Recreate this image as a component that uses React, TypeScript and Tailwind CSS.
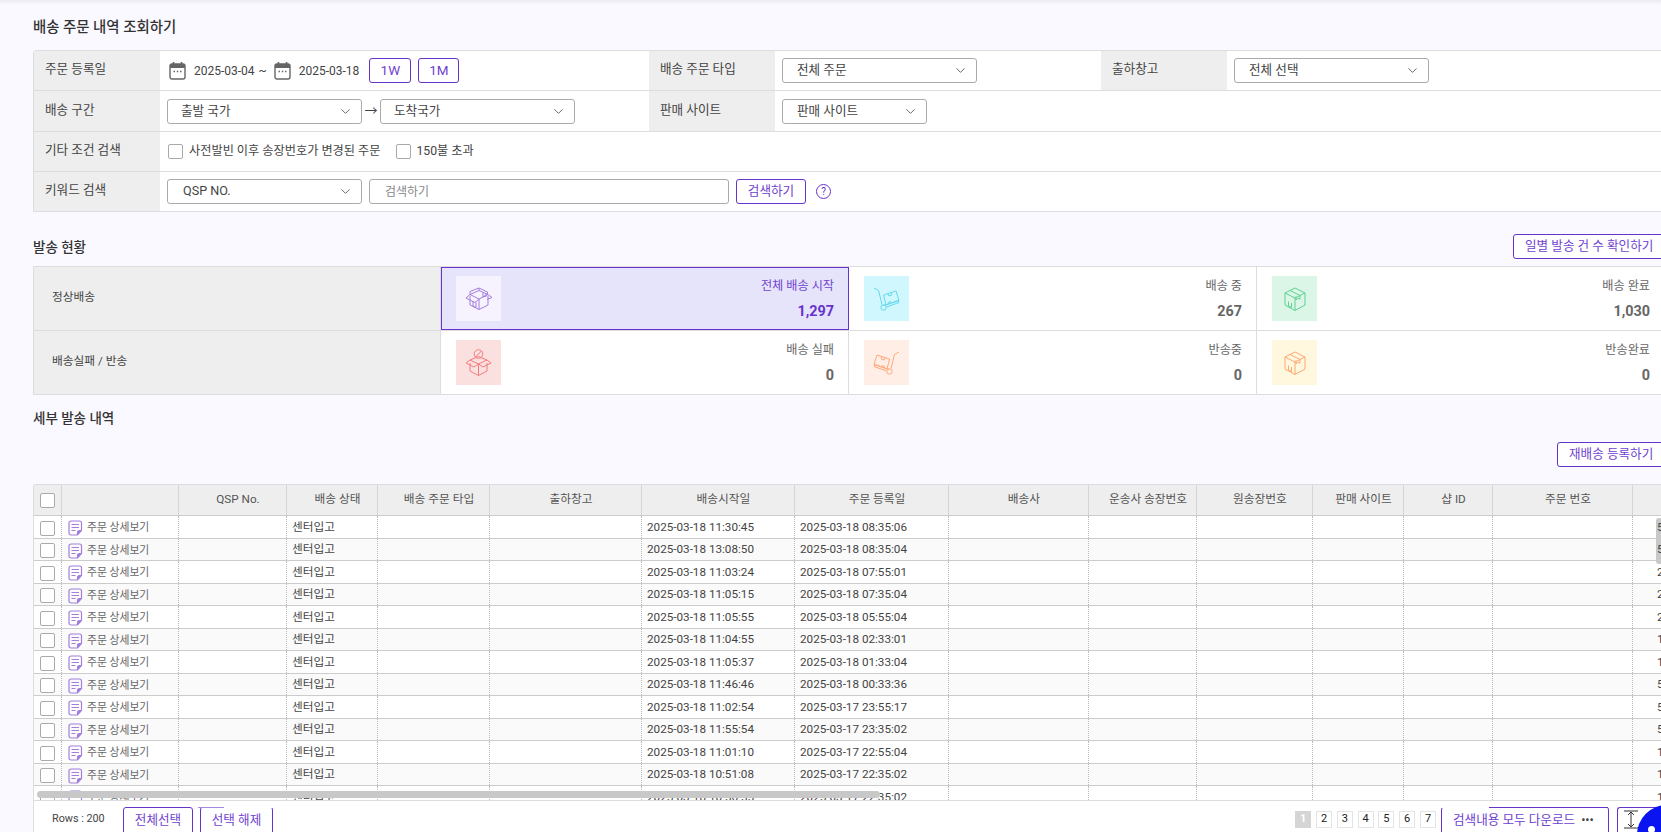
import type { ReactNode } from "react";
import { ChevronDown } from "lucide-react";

const rows = [
  ["2025-03-18 11:30:45", "2025-03-18 08:35:06", "5"],
  ["2025-03-18 13:08:50", "2025-03-18 08:35:04", "5"],
  ["2025-03-18 11:03:24", "2025-03-18 07:55:01", "2"],
  ["2025-03-18 11:05:15", "2025-03-18 07:35:04", "2"],
  ["2025-03-18 11:05:55", "2025-03-18 05:55:04", "2"],
  ["2025-03-18 11:04:55", "2025-03-18 02:33:01", "1"],
  ["2025-03-18 11:05:37", "2025-03-18 01:33:04", "1"],
  ["2025-03-18 11:46:46", "2025-03-18 00:33:36", "5"],
  ["2025-03-18 11:02:54", "2025-03-17 23:55:17", "5"],
  ["2025-03-18 11:55:54", "2025-03-17 23:35:02", "5"],
  ["2025-03-18 11:01:10", "2025-03-17 22:55:04", "1"],
  ["2025-03-18 10:51:08", "2025-03-17 22:35:02", "1"],
  ["2025-03-18 10:56:55", "2025-03-17 22:35:02", "1"],
];

const headers = ["", "QSP No.", "배송 상태", "배송 주문 타입", "출하창고", "배송시작일", "주문 등록일", "배송사", "운송사 송장번호", "원송장번호", "판매 사이트", "샵 ID", "주문 번호", ""];

const gridCols = "grid grid-cols-[28px_117px_108px_91px_112px_152px_153px_154px_140px_108px_116px_91px_89px_140px_129px]";

function Calendar() {
  return (
    <svg width="17" height="19" viewBox="0 0 17 19" fill="none" className="shrink-0">
      <path d="M1 5a2 2 0 0 1 2-2h11a2 2 0 0 1 2 2v2H1z" fill="#666" />
      <rect x="1" y="3" width="15" height="15" rx="2" stroke="#666" strokeWidth="1.4" />
      <path d="M4.5 1v3M12.5 1v3" stroke="#666" strokeWidth="1.6" />
      <path d="M4.5 10.5h1.5M7.8 10.5h1.5M11 10.5h1.5" stroke="#666" strokeWidth="1.4" />
    </svg>
  );
}

function Select({ label, className, pad = "pl-[13px]" }: { label: string; className: string; pad?: string }) {
  return (
    <div className={`flex h-[25px] items-center justify-between rounded-[3px] border border-[#aaa] bg-white pr-[8px] text-[12.6px] text-[#444] ${pad} ${className}`}>
      <span>{label}</span>
      <ChevronDown size={15} strokeWidth={1.4} className="text-[#555]" />
    </div>
  );
}

function Label({ children, className = "w-[126px]" }: { children: ReactNode; className?: string }) {
  return <div className={`flex shrink-0 items-center self-stretch bg-[#eeeeee] pb-[2px] pl-[11px] text-[12.6px] text-[#444] ${className}`}>{children}</div>;
}

function OutlineBtn({ children, className = "" }: { children: ReactNode; className?: string }) {
  return <button className={`flex h-[25px] items-center justify-center rounded-[3px] border border-[#6633cc] bg-white text-[#6f42d0] ${className}`}>{children}</button>;
}

function Check({ className = "" }: { className?: string }) {
  return <span className={`block h-[15px] w-[15px] shrink-0 rounded-[2px] border border-[#aaa] bg-white ${className}`} />;
}

function OpenBox({ color }: { color: string }) {
  return (
    <svg width="28" height="23" viewBox="0 0 28 23" fill="none" stroke={color} strokeWidth="1">
      <path d="M5 9v9l9 4.5 9-4.5V9" />
      <path d="M14 22.500V12L5 7.500 14 3.500l9 4L14 12" />
      <path d="M5 7.500 1 11l9 4.500L14 12M23 7.500 27 10.500l-5 2M14 3.500V1L5 4.500v3M14 1l8.500 4v2.500" />
      <path d="M18 6v4l1.500-.8 1.500.3V6.500M8 14v5l3 1.500v-5" />
    </svg>
  );
}

function BlockedBox({ color }: { color: string }) {
  return (
    <svg width="27" height="27" viewBox="0 0 27 27" fill="none" stroke={color} strokeWidth="1">
      <circle cx="13.500" cy="5" r="4.300" />
      <path d="M10.500 8 16.500 2" />
      <path d="M5 14v8l8.500 4.500L22 22v-8" />
      <path d="M13.500 26.500V15L5 11l8.500-3.500L22 11l-8.500 4" />
      <path d="M5 11 1 14l8 4 4.500-3 4.500 3 8-4-4-3" />
    </svg>
  );
}

function ClosedBox({ color }: { color: string }) {
  return (
    <svg width="22" height="24" viewBox="0 0 22 24" fill="none" stroke={color} strokeWidth="1">
      <path d="M11 1 21 6v12l-10 5.500L1 18V6z" />
      <path d="M1 6l10 5 10-5M11 11v12.500" />
      <path d="M6 3.500l10 5V12l-2.500-.5L12 13V9.500M4.500 14.500v4.500l3 1.500v-4.500" />
    </svg>
  );
}

function Cart({ color, flip = false }: { color: string; flip?: boolean }) {
  return (
    <svg width="27" height="24" viewBox="0 0 27 24" fill="none" stroke={color} strokeWidth="1" className={flip ? "-scale-x-100" : ""}>
      <path d="M1 1l4.500 2.500 3.500 14" />
      <circle cx="10.500" cy="20.500" r="2.700" />
      <path d="M13.500 20 26 15.500l-1-2-14.500 5" />
      <path d="M10.500 8 23 4l3 9.500-13 4.500z" />
      <path d="M15 6.500l.8 2.500 3-1-.8-2.500M15 15.500l3-1" />
    </svg>
  );
}

function NoteIcon() {
  return (
    <svg width="15" height="16" viewBox="0 0 15 16" fill="none" stroke="#a27fdc" strokeWidth="1.2" className="shrink-0">
      <path d="M9.500 15H3a2 2 0 0 1-2-2V3a2 2 0 0 1 2-2h8.500a2 2 0 0 1 2 2v7.500z" />
      <path d="M3.500 4.500h7.500M3.500 7.500h7.500M3.500 10.500h4" />
      <path d="M13.500 10.500h-2a2 2 0 0 0-2 2V15" fill="#a27fdc" />
    </svg>
  );
}

function StatCell({ icon, bg, title, value, active = false }: { icon: ReactNode; bg: string; title: string; value: string; active?: boolean }) {
  return (
    <div className={`flex h-full flex-1 items-center justify-between border-r pl-[15px] pr-[14px] ${active ? "bg-[#e6e4fb] outline -outline-offset-1 outline-[#6633cc]" : "border-[#ddd] bg-white"}`}>
      <div className={`flex h-[45px] w-[45px] items-center justify-center ${bg}`}>{icon}</div>
      <div className={`flex flex-col items-end ${active ? "text-[#6f42d0]" : "text-[#666]"}`}>
        <span className="text-[12.150px] leading-[18px]">{title}</span>
        <span className={`mt-[8px] text-[14.400px] font-bold leading-[18px] ${active ? "text-[#6633cc]" : "text-[#666]"}`}>{value}</span>
      </div>
    </div>
  );
}

export default function App() {
  return (
    <div className="h-[832px] w-[1661px] overflow-hidden bg-[#f9f9ff] text-[#333] [font-family:Roboto,'Noto_Sans_CJK_KR',sans-serif]">
      <div className="h-[5px] bg-gradient-to-b from-[#ececf0] to-[#f9f9ff]" />
      <div className="w-[1700px] pl-[33px]">
        <h1 className="flex h-[45px] items-center pt-[1px] text-[14.400px] font-medium text-[#333]">배송 주문 내역 조회하기</h1>

        {/* search filter */}
        <div className="rounded-tl-[3px] border border-[#ddd] bg-white text-[12px] text-[#444]">
          <div className="flex h-[40px] items-center border-b border-[#ddd]">
            <Label>주문 등록일</Label>
            <div className="flex w-[489px] items-center pl-[9px]">
              <Calendar />
              <span className="ml-[8px]">2025-03-04</span>
              <span className="ml-[4px]">~</span>
              <span className="ml-[7px]"><Calendar /></span>
              <span className="ml-[8px]">2025-03-18</span>
              <OutlineBtn className="ml-[10px] w-[42px] text-[13.500px]">1W</OutlineBtn>
              <OutlineBtn className="ml-[7px] w-[41px] text-[13.500px]">1M</OutlineBtn>
            </div>
            <Label>배송 주문 타입</Label>
            <div className="flex w-[326px] items-center pl-[7px]">
              <Select label="전체 주문" className="w-[195px]" pad="pl-[14px]" />
            </div>
            <Label>출하창고</Label>
            <div className="flex items-center pl-[7px]">
              <Select label="전체 선택" className="w-[195px]" pad="pl-[14px]" />
            </div>
          </div>
          <div className="flex h-[41px] items-center border-b border-[#ddd]">
            <Label>배송 구간</Label>
            <div className="flex w-[489px] items-center pl-[7px]">
              <Select label="출발 국가" className="w-[195px]" />
              <span className="flex w-[18px] justify-center text-[13px]">→</span>
              <Select label="도착국가" className="w-[195px]" />
            </div>
            <Label>판매 사이트</Label>
            <div className="flex items-center pl-[7px]">
              <Select label="판매 사이트" className="w-[145px]" pad="pl-[14px]" />
            </div>
          </div>
          <div className="flex h-[40px] items-center border-b border-[#ddd]">
            <Label>기타 조건 검색</Label>
            <div className="flex items-center pl-[8px] text-[12.200px]">
              <Check />
              <span className="ml-[6px]">사전발빈 이후 송장번호가 변경된 주문</span>
              <Check className="ml-[15px]" />
              <span className="ml-[6px]">150불 초과</span>
            </div>
          </div>
          <div className="flex h-[39px] items-center">
            <Label>키워드 검색</Label>
            <div className="flex items-center pl-[7px]">
              <Select label="QSP NO." className="w-[195px]" pad="pl-[15px]" />
              <div className="ml-[7px] flex h-[25px] w-[360px] items-center rounded-[3px] border border-[#aaa] bg-white pl-[15px] text-[#888]">검색하기</div>
              <OutlineBtn className="ml-[7px] w-[70px] text-[12.600px]">검색하기</OutlineBtn>
              <span className="ml-[10px] flex h-[15px] w-[15px] items-center justify-center rounded-full border border-[#6633cc] text-[10px] leading-none text-[#6633cc]">?</span>
            </div>
          </div>
        </div>

        {/* delivery status */}
        <div className="flex h-[54px] items-end justify-between pb-[7px]">
          <h2 className="mb-[2px] text-[13.500px] font-medium leading-[20px] text-[#333]">발송 현황</h2>
          <OutlineBtn className="w-[187px] justify-start pl-[11px] text-[12.600px]">일별 발송 건 수 확인하기</OutlineBtn>
        </div>
        <div className="w-[1633px] border border-[#ddd] text-[11.700px] text-[#444]">
          <div className="flex h-[64px] items-center border-b border-[#ddd]">
            <div className="flex h-full w-[407px] shrink-0 items-center border-r border-[#ddd] bg-[#eeeeee] pb-[1px] pl-[18px]">정상배송</div>
            <StatCell icon={<OpenBox color="#a27fdc" />} bg="bg-[#f6f3ff]" title="전체 배송 시작" value="1,297" active />
            <StatCell icon={<Cart color="#66d9ee" />} bg="bg-[#cff7fd]" title="배송 중" value="267" />
            <StatCell icon={<ClosedBox color="#5cd192" />} bg="bg-[#dbf6e6]" title="배송 완료" value="1,030" />
          </div>
          <div className="flex h-[63px] items-center">
            <div className="flex h-full w-[407px] shrink-0 items-center border-r border-[#ddd] bg-[#eeeeee] pb-[1px] pl-[18px]">배송실패 / 반송</div>
            <StatCell icon={<BlockedBox color="#f47c7c" />} bg="bg-[#fbe0e0]" title="배송 실패" value="0" />
            <StatCell icon={<Cart color="#ffa97c" flip />} bg="bg-[#ffeee6]" title="반송중" value="0" />
            <StatCell icon={<ClosedBox color="#ffa872" />} bg="bg-[#fff7de]" title="반송완료" value="0" />
          </div>
        </div>

        {/* detail grid */}
        <h2 className="mt-[13px] text-[13.500px] font-medium leading-[20px] text-[#333]">세부 발송 내역</h2>
        <div className="mt-[14px] flex w-[1628px] justify-end overflow-hidden">
          <OutlineBtn className="-mr-[7px] w-[111px] justify-start pl-[11px] text-[12.600px]">재배송 등록하기</OutlineBtn>
        </div>

        <div className="relative mt-[17px] w-[1628px] overflow-hidden rounded-tl-[3px] border-l border-t border-[#ddd] bg-white text-[11.700px]">
          <div className={`${gridCols} h-[31px] border-b border-[#ccc] bg-[#eeeeee] text-[#555]`}>
            <div className="flex items-center justify-center border-r border-[#d5d5d5]">
              <Check className="-ml-px" />
            </div>
            {headers.map((h, i) => (
              <div key={i} className="flex items-center justify-center border-r border-[#d5d5d5] pl-[11px]">{h}</div>
            ))}
          </div>
          <div className="h-[284px] overflow-hidden">
            {rows.map((r, i) => (
              <div key={i} className={`${gridCols} h-[22.500px] border-b border-[#ccc] text-[#444] ${i % 2 ? "bg-[#fafafa]" : "bg-white"}`}>
                <div className="flex items-center justify-center border-r border-dotted border-[#bbb] pt-[3px]"><Check /></div>
                <div className="flex items-center border-r border-dotted border-[#bbb] pl-[6px] pt-[3px] text-[10.800px] text-[#666]">
                  <NoteIcon />
                  <span className="ml-[4px]">주문 상세보기</span>
                </div>
                <div className="border-r border-dotted border-[#bbb]" />
                <div className="flex items-center border-r border-dotted border-[#bbb] pl-[5px] pt-[2px]">센터입고</div>
                <div className="border-r border-dotted border-[#bbb]" />
                <div className="border-r border-dotted border-[#bbb]" />
                <div className="flex items-center border-r border-dotted border-[#bbb] pl-[5px] pt-[2px]">{r[0]}</div>
                <div className="flex items-center border-r border-dotted border-[#bbb] pl-[5px] pt-[2px]">{r[1]}</div>
                <div className="border-r border-dotted border-[#bbb]" />
                <div className="border-r border-dotted border-[#bbb]" />
                <div className="border-r border-dotted border-[#bbb]" />
                <div className="border-r border-dotted border-[#bbb]" />
                <div className="border-r border-dotted border-[#bbb]" />
                <div className="border-r border-dotted border-[#bbb]" />
                <div className="relative z-10 flex items-center pl-[24px] pt-[2px]">{r[2]}</div>
              </div>
            ))}
          </div>
          {/* scrollbars sit over the rows */}
          <div className="absolute left-[3px] top-[306px] h-[7px] w-[843px] rounded-full bg-[#c8c8c8]" />
          <div className="absolute right-0 top-[33px] h-[46px] w-[5px] rounded-l-[3px] bg-[#c8c8c8]" />

          <div className="relative flex h-[32px] items-start border-t border-[#ddd] pt-[6px]">
            <span className="mt-[4px] w-[89px] shrink-0 pl-[18px] text-[10.800px] text-[#444]">Rows : 200</span>
            <button className="flex h-[30px] w-[70px] shrink-0 items-start justify-center rounded-[3px] border border-[#6633cc] pt-[3px] text-[12.600px] text-[#6f42d0]">전체선택</button>
            <button className="relative ml-[7px] flex h-[30px] w-[73px] shrink-0 items-start justify-center rounded-[3px] border border-[#6633cc] border-t-transparent pt-[3px] text-[12.600px] text-[#6f42d0]">
              선택 해제
              <span className="absolute -left-[3px] -top-px h-px w-[26px] bg-[#a78be0]" />
            </button>
            <div className="ml-auto flex items-start gap-[4.800px] pt-[4px]">
              <span className="flex h-[17px] w-[16px] items-center justify-center bg-[#d5d5d5] text-[11px] font-bold text-white">1</span>
              {["2", "3", "4", "5", "6", "7"].map((p) => (
                <span key={p} className="flex h-[17px] w-[16px] items-center justify-center border border-[#e4e4e4] text-[11px] text-[#222]">{p}</span>
              ))}
            </div>
            <button className="relative ml-[5px] flex h-[30px] w-[168px] shrink-0 items-start rounded-[3px] border border-[#6633cc] border-t-transparent pl-[11px] pt-[3px] text-[12.600px] text-[#6f42d0]">
              검색내용 모두 다운로드
              <span className="ml-[6px] text-[#444]">•••</span>
              <span className="absolute left-[47px] right-0 -top-px h-px bg-[#6633cc]" />
            </button>
            <button className="ml-[8px] flex h-[30px] w-[44px] shrink-0 items-start rounded-l-[3px] border border-r-0 border-[#6633cc] pl-[6px] pt-[2px]">
              <svg width="14" height="19" viewBox="0 0 14 19" fill="none" stroke="#333" strokeWidth="1">
                <path d="M0 1h14M0 18h14M7 2v15M4 5l3-3 3 3M4 14l3 3 3-3" />
              </svg>
            </button>
            <span className="absolute -right-[36px] top-[4px] flex h-[60px] w-[60px] items-start justify-center rounded-full bg-[#0a14f0] pt-[21px]">
              <span className="-ml-[32px] h-[7px] w-[7px] rounded-full bg-white" />
            </span>
          </div>
        </div>
      </div>
    </div>
  );
}
